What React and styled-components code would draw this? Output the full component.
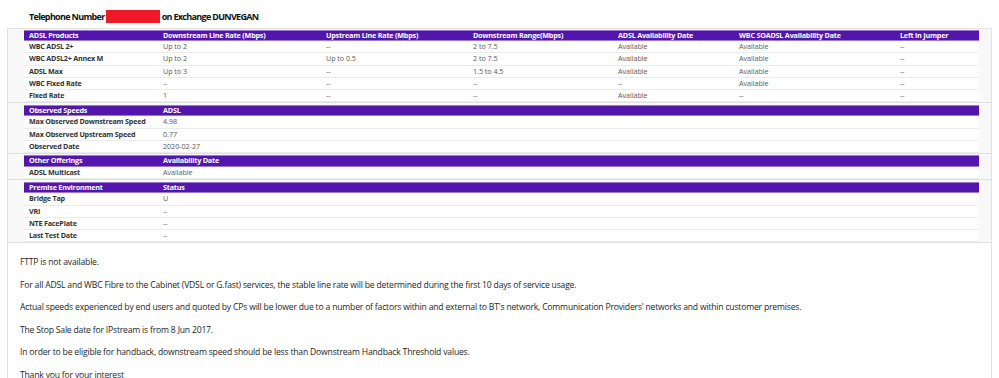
import React from "react";
import styled, { createGlobalStyle } from "styled-components";

const GlobalStyle = createGlobalStyle`
  html, body { margin: 0; padding: 0; background: #ffffff; }
  body { font-family: "Open Sans", "Noto Sans", Arial, sans-serif; color: #222; }
`;

const Page = styled.div`
  width: 999px;
  height: 378px;
  overflow: hidden;
  display: flex;
  flex-direction: column;
`;

const TopShade = styled.div`
  height: 1px;
  margin: 0 79px 0 78px;
  background: #e4e4e4;
  box-shadow: 0 1px 1px rgba(0, 0, 0, 0.04);
`;

const Heading = styled.div`
  display: flex;
  align-items: center;
  height: 13px;
  margin: 10px 0 5px 29px;
  font-size: 9px;
  font-weight: 700;
  letter-spacing: -0.68px;
  color: #111;
`;

const Redacted = styled.span`
  display: inline-block;
  width: 54px;
  height: 12.5px;
  margin: 0 2px 0 1px;
  background: #ed1c24;
`;

const Outer = styled.div`
  margin: 0 7px;
  border: 1px solid #e2e2e2;
  border-bottom: none;
  flex: 1;
`;

const Panel = styled.div`
  background: #f8f8f8;
`;

const Section = styled.div`
  padding: ${(p) => (p.$first ? "0.5px" : "1.5px")} 12px 0 16px;
  border-bottom: 1px solid #e0e0e0;
`;

const Table = styled.div`
  display: grid;
  grid-template-columns: ${(p) => p.$cols};
  background: #ffffff;
`;

const HeadCell = styled.div`
  height: 11.7px;
  line-height: 11.7px;
  padding-left: 5px;
  background: #5216ad;
  box-shadow: inset 0 1px 0 #9a78d3, inset 0 -1px 0 #9a78d3;
  color: #ffffff;
  font-size: 7.2px;
  font-weight: 700;
  letter-spacing: -0.2px;
  white-space: nowrap;
  overflow: hidden;
`;

const Cell = styled.div`
  height: 11.2px;
  line-height: 11.8px;
  padding-left: 5px;
  border-bottom: 1px solid #ececec;
  font-size: 7.2px;
  font-weight: ${(p) => (p.$label ? 700 : 400)};
  color: ${(p) => (p.$label ? "#333" : "#5a5a5a")};
  letter-spacing: ${(p) => (p.$label ? "-0.22px" : "-0.05px")};
  white-space: nowrap;
  overflow: hidden;
`;

const Notes = styled.div`
  padding: 13px 0 0 12px;
  background: #ffffff;
`;

const Note = styled.p`
  margin: 0 0 10.5px 0;
  font-size: 8.6px;
  line-height: 12px;
  letter-spacing: -0.19px;
  color: #1e1e1e;
  white-space: nowrap;
`;

const productCols = "134px 163px 147px 145px 121px 161px 1fr";
const twoCols = "134px 1fr";

const sections = [
  {
    cols: productCols,
    head: [
      "ADSL Products",
      "Downstream Line Rate (Mbps)",
      "Upstream Line Rate (Mbps)",
      "Downstream Range(Mbps)",
      "ADSL Availability Date",
      "WBC SOADSL Availability Date",
      "Left in Jumper",
    ],
    rows: [
      ["WBC ADSL 2+", "Up to 2", "--", "2 to 7.5", "Available", "Available", "--"],
      ["WBC ADSL2+ Annex M", "Up to 2", "Up to 0.5", "2 to 7.5", "Available", "Available", "--"],
      ["ADSL Max", "Up to 3", "--", "1.5 to 4.5", "Available", "Available", "--"],
      ["WBC Fixed Rate", "--", "--", "--", "--", "Available", "--"],
      ["Fixed Rate", "1", "--", "--", "Available", "--", "--"],
    ],
  },
  {
    cols: twoCols,
    head: ["Observed Speeds", "ADSL"],
    rows: [
      ["Max Observed Downstream Speed", "4.98"],
      ["Max Observed Upstream Speed", "0.77"],
      ["Observed Date", "2020-02-27"],
    ],
  },
  {
    cols: twoCols,
    head: ["Other Offerings", "Availability Date"],
    rows: [["ADSL Multicast", "Available"]],
  },
  {
    cols: twoCols,
    head: ["Premise Environment", "Status"],
    rows: [
      ["Bridge Tap", "U"],
      ["VRI", "--"],
      ["NTE FacePlate", "--"],
      ["Last Test Date", "--"],
    ],
  },
];

const notes = [
  "FTTP is not available.",
  "For all ADSL and WBC Fibre to the Cabinet (VDSL or G.fast) services, the stable line rate will be determined during the first 10 days of service usage.",
  "Actual speeds experienced by end users and quoted by CPs will be lower due to a number of factors within and external to BT's network, Communication Providers' networks and within customer premises.",
  "The Stop Sale date for IPstream is from 8 Jun 2017.",
  "In order to be eligible for handback, downstream speed should be less than Downstream Handback Threshold values.",
  "Thank you for your interest",
];

export default function App() {
  return (
    <Page>
      <GlobalStyle />
      <TopShade />
      <Heading>
        Telephone Number
        <Redacted />
        on Exchange DUNVEGAN
      </Heading>
      <Outer>
        <Panel>
          {sections.map((s, si) => (
            <Section key={si} $first={si === 0}>
              <Table $cols={s.cols}>
                {s.head.map((h, i) => (
                  <HeadCell key={"h" + i}>{h}</HeadCell>
                ))}
                {s.rows.map((r, ri) =>
                  r.map((c, ci) => (
                    <Cell key={ri + "-" + ci} $label={ci === 0}>
                      {c}
                    </Cell>
                  ))
                )}
              </Table>
            </Section>
          ))}
        </Panel>
        <Notes>
          {notes.map((n, i) => (
            <Note key={i}>{n}</Note>
          ))}
        </Notes>
      </Outer>
    </Page>
  );
}
